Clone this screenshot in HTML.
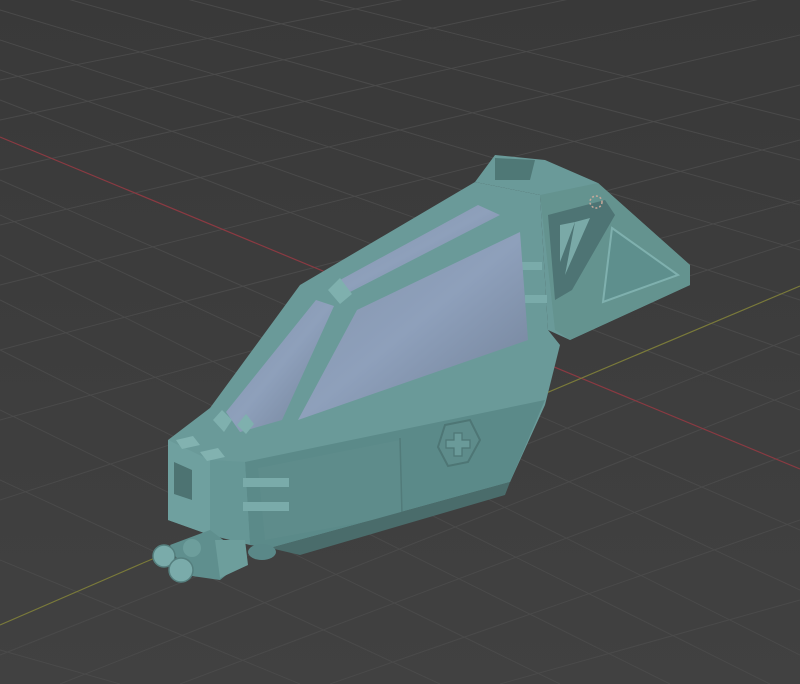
<!DOCTYPE html>
<html><head><style>
html,body{margin:0;padding:0;background:#3d3d3d;width:800px;height:684px;overflow:hidden;}
svg{display:block;overflow:hidden}
</style></head><body>
<svg width="800" height="684" viewBox="0 0 800 684" xmlns="http://www.w3.org/2000/svg">
<defs>
<linearGradient id="gl" x1="0" y1="0" x2="1" y2="1">
<stop offset="0" stop-color="#8393ab"/><stop offset="0.5" stop-color="#8ea0bb"/><stop offset="1" stop-color="#6f7f96"/>
</linearGradient>
<linearGradient id="bg" x1="0" y1="0" x2="0" y2="1">
<stop offset="0" stop-color="#393939"/><stop offset="1" stop-color="#414141"/>
</linearGradient>
<clipPath id="c"><rect width="800" height="684"/></clipPath>
</defs>
<g clip-path="url(#c)">
<rect width="800" height="684" fill="url(#bg)"/>
<g stroke="#4a4a4a" stroke-width="1" fill="none">
<path d="M0,40 L800,300 M0,70 L800,355 M0,100 L800,410 M0,180 L800,530 M0,215 L800,590 M0,255 L800,655 M0,300 L770,684 M0,350 L670,684 M0,410 L560,684 M0,480 L440,684 M0,560 L300,684 M0,650 L120,684 M0,10 L800,250 M0,-20 L800,205 M0,-50 L800,160 M0,-80 L800,120"/>
<path d="M0,120 L800,-50 M0,170 L800,-10 M0,225 L800,35 M0,285 L800,85 M0,350 L800,140 M0,420 L800,200 M0,500 L800,240 M0,655 L800,335 M60,684 L800,390 M180,684 L800,450 M330,684 L800,520 M500,684 L800,600 M0,80 L800,-80"/>
</g>
<line x1="0" y1="137" x2="800" y2="469" stroke="#8a3a42" stroke-width="1.2"/>
<line x1="143" y1="563" x2="800" y2="286" stroke="#7a7a3a" stroke-width="1.2"/>
<line x1="0" y1="625" x2="143" y2="563" stroke="#7a7a3a" stroke-width="1.2"/>

<polygon points="475,182 495,155 545,160 598,183 690,265 690,285 570,340 548,330 540,195" fill="#6a9a99"/>
<polygon points="540,195 598,183 690,265 690,285 570,340 555,330" fill="#64938f"/>
<polygon points="548,215 605,200 615,215 572,290 555,300" fill="#4e7474"/>
<polygon points="560,225 575,222 560,262" fill="#7aa9a7"/>
<polygon points="575,222 590,218 565,275" fill="#7aa9a7"/>
<polygon points="612,228 678,275 603,302" fill="#5e8f8d" stroke="#7fb0ae" stroke-width="2"/>
<polygon points="495,158 535,160 530,180 495,180" fill="#4f7876"/>
<circle cx="596" cy="202" r="6" fill="none" stroke="#c8a89a" stroke-width="1.5" stroke-dasharray="2 2"/>

<polygon points="168,440 210,408 300,285 475,182 540,195 548,330 560,345 545,405 510,482 270,548 210,535 168,520" fill="#6a9a99"/>
<polygon points="245,462 545,400 510,482 270,548 250,545" fill="#5b8a89"/>
<polygon points="258,468 400,440 402,515 265,540" fill="#5e8c8b"/>
<line x1="400" y1="438" x2="402" y2="515" stroke="#527b7a" stroke-width="1.5"/>
<polygon points="270,548 510,482 505,495 300,555" fill="#4a6c6b"/>
<polygon points="168,440 210,460 210,535 168,520" fill="#6fa09f"/>
<polygon points="174,462 192,470 192,500 174,494" fill="#4d7372"/>
<polygon points="210,460 245,462 250,545 210,535" fill="#669796"/>
<polygon points="176,440 193,436 200,445 182,449" fill="#82b2b0"/>
<polygon points="200,452 218,448 225,457 207,461" fill="#82b2b0"/>
<rect x="243" y="478" width="46" height="9" fill="#7aabaa"/>
<rect x="243" y="502" width="46" height="9" fill="#7aabaa"/>
<rect x="520" y="262" width="22" height="8" fill="#7aabaa"/>
<rect x="525" y="295" width="22" height="8" fill="#7aabaa"/>
<polygon points="445,425 470,420 480,440 468,462 448,466 438,447" fill="#5e8c8b" stroke="#4e7675" stroke-width="2"/>
<path d="M454,433 h8 v7 h8 v8 h-8 v8 h-8 v-8 h-8 v-8 h8 z" fill="#6a9a99" stroke="#4e7675" stroke-width="1.2"/>

<polygon points="226,412 316,300 334,306 282,420 240,432" fill="url(#gl)"/>
<polygon points="298,420 357,310 520,232 528,340" fill="url(#gl)"/>
<polygon points="340,280 478,205 500,215 350,292" fill="url(#gl)"/>
<polygon points="328,290 340,278 352,294 340,304" fill="#7fb0ae"/>
<polygon points="213,420 222,410 232,420 224,432" fill="#7fb0ae"/>
<polygon points="237,425 246,414 254,424 246,434" fill="#7fb0ae"/>

<polygon points="170,545 210,530 230,545 245,560 220,580 185,575" fill="#5f8f8e"/>
<polygon points="215,540 245,540 248,565 220,578" fill="#6d9e9c"/>
<ellipse cx="262" cy="552" rx="14" ry="8" fill="#5a8888"/>
<circle cx="164" cy="556" r="11" fill="#7aabaa" stroke="#557f7e" stroke-width="1.5"/>
<circle cx="181" cy="570" r="12" fill="#7aabaa" stroke="#557f7e" stroke-width="1.5"/>
<circle cx="192" cy="548" r="9" fill="#6d9e9c"/>
</g>
</svg>
</body></html>
